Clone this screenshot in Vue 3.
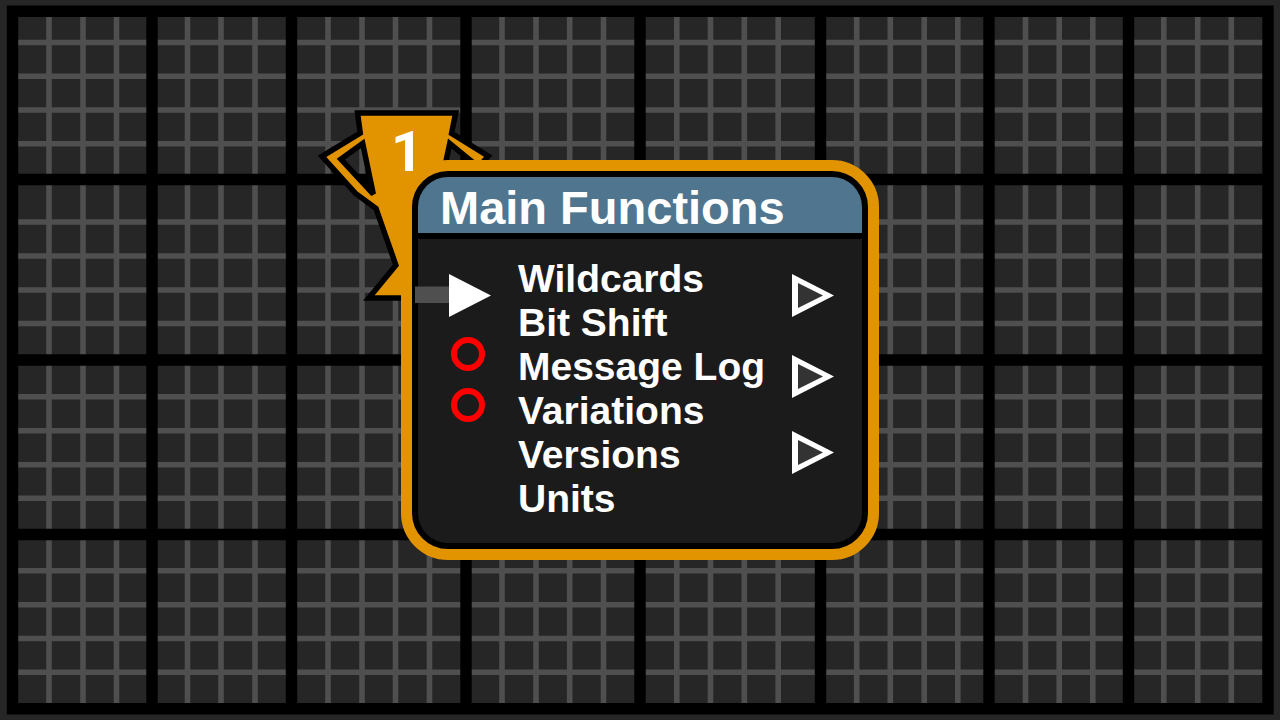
<script setup>
const majorX = [12.5, 152, 291.5, 466, 640, 820.5, 989, 1128.5, 1268]
const minorX = [
  49, 83, 116.5, 187.5, 221, 255, 328, 362, 395.5, 429.5, 502, 536, 569.7, 603.5,
  676.8, 710.5, 744.3, 778.2, 856.7, 890.3, 924.2, 957.8, 1025.5, 1059.2, 1092.8,
  1163.8, 1197.7, 1231.3,
]
const majorY = [11.2, 179.5, 360, 534.5, 708.8]
const minorY = [
  42.5, 76.3, 110, 143.7, 222, 256, 290, 323.5, 396.7, 430.7, 464.7, 498.3,
  570.8, 604.8, 638.5, 672.3,
]

const vertical = (xs) => xs.map((x) => `M${x} 11.2V708.8`).join('')
const horizontal = (ys) => ys.map((y) => `M12.5 ${y}H1268`).join('')

const cup =
  'M80.7 25.7H172.3L168.5 44.7L204 66.7L163 115L155 117L135 176L160 205.3H94.7L119 175.7L98.3 116.7L77.5 101.5L46.3 67L83.2 44.5Z' +
  'M84.5 48.7L56.7 68.7L91.3 106L96 103.5Z' +
  'M168 48.5L195.5 71L160 106L157 100Z'

const entries = ['Wildcards', 'Bit Shift', 'Message Log', 'Variations', 'Versions', 'Units']
</script>

<template>
  <main class="canvas">
    <svg class="grid" viewBox="0 0 1280 720" preserveAspectRatio="xMidYMid slice" aria-hidden="true">
      <path class="minor" :d="vertical(minorX) + horizontal(minorY)" />
      <path class="major" :d="vertical(majorX) + horizontal(majorY)" />
    </svg>

    <article class="node">
      <svg class="trophy" viewBox="0 0 240 220" role="img" aria-label="Rank 1">
        <path class="outline" :d="cup" />
        <path class="cup" fill-rule="evenodd" :d="cup" />
        <text x="111" y="81">1</text>
      </svg>

      <section class="card">
        <header class="head">
          <h1>Main Functions</h1>
        </header>
        <div class="body">
          <div class="inputs">
            <svg class="entry" viewBox="0 0 76 43" aria-hidden="true">
              <path fill="#4f4f4f" d="M0 12.5H36V29H0Z" />
              <path fill="#fff" d="M34 0L76 21.5L34 43Z" />
            </svg>
            <span class="ring"></span>
            <span class="ring"></span>
          </div>
          <ul class="entries">
            <li v-for="entry in entries" :key="entry">{{ entry }}</li>
          </ul>
          <div class="outputs">
            <svg v-for="n in 3" :key="n" class="arrow" viewBox="0 0 42 43" aria-hidden="true">
              <path fill="#fff" d="M0 0L42 21.5L0 43Z" />
              <path fill="#333" d="M6 9L31 21.5L6 34Z" />
            </svg>
          </div>
        </div>
      </section>
    </article>
  </main>
</template>

<style>
body {
  margin: 0;
  background: #262626;
}
</style>

<style scoped>
.canvas {
  position: relative;
  display: flex;
  align-items: center;
  justify-content: center;
  min-height: 100vh;
  overflow: hidden;
  background: #262626;
  color: #fff;
  font-family: "Liberation Sans", Arial, sans-serif;
  font-weight: 700;
}

.grid {
  position: absolute;
  inset: 0;
  width: 100%;
  height: 100%;
}

.grid path {
  fill: none;
}

.minor {
  stroke: #4f4f4f;
  stroke-width: 5.6;
}

.major {
  stroke: #000;
  stroke-width: 11.4;
  stroke-linecap: square;
}

.node {
  position: relative;
}

.trophy {
  position: absolute;
  left: -121px;
  top: -70px;
  width: 240px;
  height: 220px;
}

.outline {
  fill: none;
  stroke: #000;
  stroke-width: 11;
  stroke-miterlimit: 10;
}

.cup {
  fill: #e29300;
}

.trophy text {
  fill: #fff;
  font-family: Roboto, sans-serif;
  font-size: 56px;
  font-weight: 700;
}

.card {
  position: relative;
  box-sizing: border-box;
  border: 11px solid #e29300;
  border-radius: 47px;
  background: #000;
  padding: 6px;
}

.head {
  border-radius: 30px 30px 0 0;
  background: #50768f;
  padding: 6px 22px 0;
}

h1 {
  margin: 0;
  font-size: 47px;
  line-height: 50px;
}

.body {
  display: flex;
  align-items: flex-start;
  margin-top: 6px;
  border-radius: 0 0 30px 30px;
  background: #1b1b1b;
  padding: 18px 28px 22px 31px;
}

.inputs {
  display: flex;
  flex-direction: column;
  width: 69px;
  padding-top: 17px;
}

.entry {
  width: 76px;
  height: 43px;
  margin: 0 0 20px -34px;
}

.ring {
  box-sizing: border-box;
  width: 34px;
  height: 34px;
  margin: 0 0 17px 2px;
  border: 6px solid #f00;
  border-radius: 50%;
}

.entries {
  width: 274px;
  margin: 0;
  padding: 0;
  list-style: none;
  font-size: 39px;
  line-height: 44px;
}

.outputs {
  display: flex;
  flex-direction: column;
  gap: 33px;
  padding-top: 17px;
}

.arrow {
  width: 42px;
  height: 43px;
}

.arrow:first-child {
  margin-bottom: 5px;
}
</style>
